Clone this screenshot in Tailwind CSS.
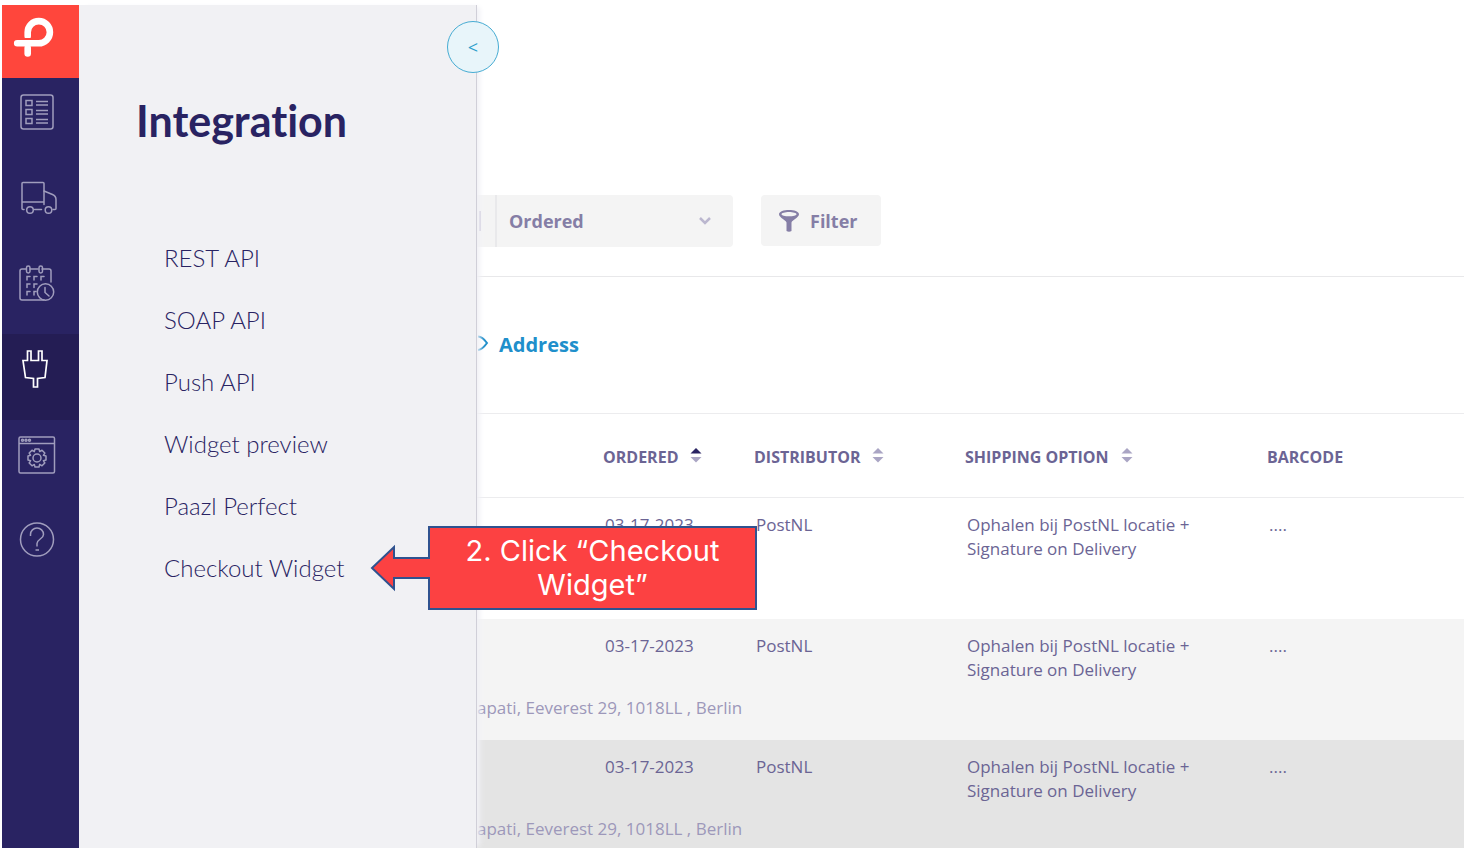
<!DOCTYPE html>
<html lang="en">
<head>
  <meta charset="UTF-8">
  <meta name="viewport" content="width=device-width, initial-scale=1.0">
  <title>Integration</title>
  <script src="https://cdn.jsdelivr.net/npm/@tailwindcss/browser@4"></script>
</head>
<body class="bg-white font-['Open_Sans',sans-serif] text-[#6b6494]">
  <div class="flex h-screen overflow-hidden pt-[5px] pl-[2px]">

    <!-- Icon sidebar -->
    <nav class="w-[77px] shrink-0 bg-[#292362] text-[#a09dbd]" aria-label="Main">
      <a href="#" class="flex h-[73px] bg-[#ff463c] text-white" aria-label="Home">
        <svg class="h-[73px] w-[76px]" viewBox="0 0 76 73" fill="none" stroke="currentColor" stroke-width="6.600" stroke-linecap="round">
          <path d="M25.700 31V27.200A11.100 11.100 0 1 1 36.700 38.300H15.200"/>
          <path d="M25.700 43V48.500"/>
          <path d="M22 34H29.200" stroke="#ff463c" stroke-width="2" stroke-linecap="butt"/>
        </svg>
      </a>
      <a href="#" class="flex h-[86px] justify-center pt-4" aria-label="Orders">
        <svg class="h-9 w-[34px] mr-2" viewBox="0 0 34 36" fill="none" stroke="currentColor" stroke-width="1.500">
          <rect x="1" y="1" width="32" height="34" rx="2.500"/>
          <path d="M6 6.500h6v5H6zM6 15.500h6v5H6zM6 24.500h6v5H6z"/>
          <path d="M16 7.500h12M16 11h12M16 16.500h12M16 20h12M16 25.500h12M16 29h12"/>
        </svg>
      </a>
      <a href="#" class="flex h-[85px] justify-center pt-4" aria-label="Shipping">
        <svg class="h-9 w-9 mr-1" viewBox="0 0 36 36" fill="none" stroke="currentColor" stroke-width="1.500" stroke-linecap="round" stroke-linejoin="round">
          <path d="M3 29.500H2a1 1 0 0 1-1-1V3.500a1 1 0 0 1 1-1h20a1 1 0 0 1 1 1v21M1 22h22"/>
          <path d="M23 11l8.500 3.500q3.500 1.500 3.500 5V28.500a1 1 0 0 1-1 1h-2M13.500 29.500h7"/>
          <circle cx="9" cy="30" r="3.300"/>
          <circle cx="27.500" cy="30" r="3.300"/>
        </svg>
      </a>
      <a href="#" class="flex h-[85px] justify-center pt-4" aria-label="Planning">
        <svg class="h-9 w-9 mr-2" viewBox="0 0 36 36" fill="none" stroke="currentColor" stroke-width="1.500" stroke-linecap="round">
          <path d="M7 4H3a2 2 0 0 0-2 2V33a2 2 0 0 0 2 2h22M11 4h8M23 4h7a2 2 0 0 1 2 2v11"/>
          <rect x="7.500" y="1" width="3.500" height="7" rx="1.700"/>
          <rect x="20" y="1" width="3.500" height="7" rx="1.700"/>
          <path d="M8 15v-3.500h3M15 15v-3.500h3M22 15v-3.500h3M8 22.500V19h3M15 22.500V19h3M8 30v-3.500h3M15 30v-3.500h2"/>
          <circle cx="26.500" cy="27" r="8.200"/>
          <path d="M26 22.500v5l4 3.500"/>
        </svg>
      </a>
      <a href="#" class="flex h-[86px] justify-center bg-[#241d54] pt-4 text-white" aria-label="Integration">
        <svg class="h-[38px] w-[26px] mr-3" viewBox="0 0 26 38" fill="none" stroke="currentColor" stroke-width="1.700">
          <path d="M1 10.500h4.500V1H9v9.500h7.500V1H20v9.500h5L23 27.500l-7.500 1V37h-4v-8.500L3.500 27.500z"/>
        </svg>
      </a>
      <a href="#" class="flex h-[85px] justify-center pt-4" aria-label="Settings">
        <svg class="h-[38px] w-[38px] mr-2" viewBox="0 0 38 38" fill="none" stroke="currentColor" stroke-width="1.500" stroke-linejoin="round">
          <rect x="1" y="1" width="35.500" height="36" rx="1.500"/>
          <path d="M1 7.500h35.500"/>
          <circle cx="4.500" cy="4.200" r="1"/><circle cx="8" cy="4.200" r="1"/><circle cx="11.500" cy="4.200" r="1"/>
          <circle cx="19" cy="22" r="4"/>
          <path d="M17 13h4l.7 2.600 2.300-1.400 2.800 2.800-1.400 2.300L28 20v4l-2.600.7 1.400 2.300-2.800 2.800-2.300-1.400L21 31h-4l-.7-2.600-2.300 1.400-2.800-2.800 1.400-2.300L10 24v-4l2.600-.7-1.400-2.300 2.800-2.800 2.300 1.400z"/>
        </svg>
      </a>
      <a href="#" class="flex h-[85px] justify-center pt-4" aria-label="Help">
        <svg class="h-[36px] w-[36px] mr-2" viewBox="0 0 36 36" fill="none" stroke="currentColor" stroke-width="1.500">
          <circle cx="18" cy="18.500" r="16.500"/>
          <path d="M11.500 15V13.500a6.500 6.500 0 0 1 13 0c0 4.500-6.500 4.500-6.500 9v3M16.500 29h3.500"/>
        </svg>
      </a>
    </nav>

    <!-- Integration submenu -->
    <aside class="relative z-10 w-[398px] shrink-0 border-r border-[#d0cfd8] bg-[#f1f1f4] pt-[89px] pl-[57px] font-['Lato',sans-serif] text-[#292362] shadow-[5px_0_5px_-2px_#f1f1f6]">
      <button class="absolute top-[16px] -right-[23px] size-[52px] rounded-full border border-[#47acd3] bg-[#e8f5fa] font-['Open_Sans',sans-serif] text-lg text-[#2d9fcc]" aria-label="Close menu">&lt;</button>
      <h1 class="text-[43px] leading-[54px] font-bold [font-variant-ligatures:none]">Integration</h1>
      <ul class="mt-[79px] pl-[28px] text-2xl leading-[62px] font-light">
        <li><a href="#">REST API</a></li>
        <li><a href="#">SOAP API</a></li>
        <li><a href="#">Push API</a></li>
        <li><a href="#">Widget preview</a></li>
        <li><a href="#">Paazl Perfect</a></li>
        <li class="relative">
          <a href="#">Checkout Widget</a>
          <!-- Step callout -->
          <div class="absolute top-[-11px] left-[206px] flex items-center font-normal">
            <svg class="z-10 h-[48px] w-[60px] shrink-0" viewBox="0 0 60 48" fill="#fc4142" stroke="#2f528f" stroke-width="2">
              <path d="M60 14H24V3L2 24l22 21V34h36"/>
            </svg>
            <p class="-ml-[2px] w-[329px] border-2 border-[#2f528f] bg-[#fc4142] py-[6px] text-center font-['Inter',sans-serif] text-[29px] leading-[34px] text-white">2. Click “Checkout<br>Widget”</p>
          </div>
        </li>
      </ul>
    </aside>

    <!-- Orders -->
    <main class="min-w-0 flex-1">
      <div class="flex h-[272px] items-start border-b border-[#e8e8ea] pt-[190px] font-bold text-[#857ea6]">
        <div class="flex h-[52px] w-[18px] items-center bg-[#f4f4f4]">
          <span class="h-5 w-1 border-r-2 border-[#d0cddd]"></span>
        </div>
        <div class="relative">
          <select class="h-[52px] w-[238px] appearance-none rounded-r border-l-2 border-[#e9e9eb] bg-[#f4f4f4] pl-[12px] text-lg" aria-label="Date type">
            <option>Ordered</option>
          </select>
          <svg class="pointer-events-none absolute top-[20px] right-[20px] h-3 w-4" viewBox="0 0 16 12" fill="none" stroke="#bbb7cf" stroke-width="2.500"><path d="M3 3l5 5 5-5"/></svg>
        </div>
        <button class="ml-[28px] flex h-[51px] w-[120px] items-center gap-[10px] rounded bg-[#f4f4f4] pl-[17px] text-lg">
          <svg class="h-[22px] w-[22px]" viewBox="0 0 22 22" fill="currentColor">
            <path fill-rule="evenodd" d="M11 0C16 0 21 1.500 21 4.200 21 7.500 14 10 13.500 12.500V21q-2.500 1.500-5 0V12.500C8 10 1 7.500 1 4.200 1 1.500 6 0 11 0zM11 2C7 2 3.500 3 3.500 4.200S7 6.300 11 6.300s7.500-.900 7.500-2.100S15 2 11 2z"/>
          </svg>
          Filter
        </button>
      </div>

      <div class="flex h-[136px] pt-[54px] text-[#208fcb]">
        <a href="#" class="flex h-7 items-center gap-[10px] text-xl font-bold">
          <svg class="mb-1 h-4 w-3" viewBox="0 0 12 16" fill="none" stroke="currentColor" stroke-width="2"><path d="M1 1.500c4 0 6.500 3 9 6.500C7.500 11.500 5 14.500 1 15"/></svg>
          Address
        </a>
      </div>

      <table class="w-full table-fixed text-left text-[17px] leading-6">
        <colgroup>
          <col class="w-[126px]">
          <col class="w-[151px]">
          <col class="w-[211px]">
          <col class="w-[302px]">
          <col>
        </colgroup>
        <thead class="border-y border-[#ececee]">
          <tr class="h-[84px] text-base font-bold whitespace-nowrap">
            <th></th>
            <th class="pt-[2px]">
              <span class="flex items-center gap-3">ORDERED
                <svg class="mb-1 h-4 w-3" viewBox="0 0 12 16"><path fill="#292362" d="M6 1l5.500 5.500H.5z"/><path fill="#aaa5c4" d="M6 15.500L.5 10h11z"/></svg>
              </span>
            </th>
            <th class="pt-[2px]">
              <span class="flex items-center gap-3">DISTRIBUTOR
                <svg class="mb-1 h-4 w-3" viewBox="0 0 12 16" fill="#aaa5c4"><path d="M6 1l5.500 5.500H.5z"/><path d="M6 15.500L.5 10h11z"/></svg>
              </span>
            </th>
            <th class="pt-[2px]">
              <span class="flex items-center gap-3">SHIPPING OPTION
                <svg class="mb-1 h-4 w-3" viewBox="0 0 12 16" fill="#aaa5c4"><path d="M6 1l5.500 5.500H.5z"/><path d="M6 15.500L.5 10h11z"/></svg>
              </span>
            </th>
            <th class="pt-[2px]">BARCODE</th>
          </tr>
        </thead>
        <tbody>
          <tr class="h-[63px] align-top">
            <td></td>
            <td class="pt-[15px] pl-[2px]">03-17-2023</td>
            <td class="pt-[15px] pl-[2px]">PostNL</td>
            <td class="pt-[15px] pl-[2px]">Ophalen bij PostNL locatie +<br>Signature on Delivery</td>
            <td class="pt-[15px] pl-[2px]">....</td>
          </tr>
          <tr class="h-[58px]"><td colspan="5"></td></tr>
        </tbody>
        <tbody class="bg-[#f4f4f4]">
          <tr class="h-[63px] align-top">
            <td></td>
            <td class="pt-[15px] pl-[2px]">03-17-2023</td>
            <td class="pt-[15px] pl-[2px]">PostNL</td>
            <td class="pt-[15px] pl-[2px]">Ophalen bij PostNL locatie +<br>Signature on Delivery</td>
            <td class="pt-[15px] pl-[2px]">....</td>
          </tr>
          <tr class="h-[58px] align-top text-[#9d98ba]"><td colspan="5" class="pt-[14px]">apati, Eeverest 29, 1018LL , Berlin</td></tr>
        </tbody>
        <tbody class="bg-[#e4e4e4]">
          <tr class="h-[63px] align-top">
            <td></td>
            <td class="pt-[15px] pl-[2px]">03-17-2023</td>
            <td class="pt-[15px] pl-[2px]">PostNL</td>
            <td class="pt-[15px] pl-[2px]">Ophalen bij PostNL locatie +<br>Signature on Delivery</td>
            <td class="pt-[15px] pl-[2px]">....</td>
          </tr>
          <tr class="h-[58px] align-top text-[#9d98ba]"><td colspan="5" class="pt-[14px]">apati, Eeverest 29, 1018LL , Berlin</td></tr>
        </tbody>
      </table>
    </main>
  </div>
</body>
</html>
